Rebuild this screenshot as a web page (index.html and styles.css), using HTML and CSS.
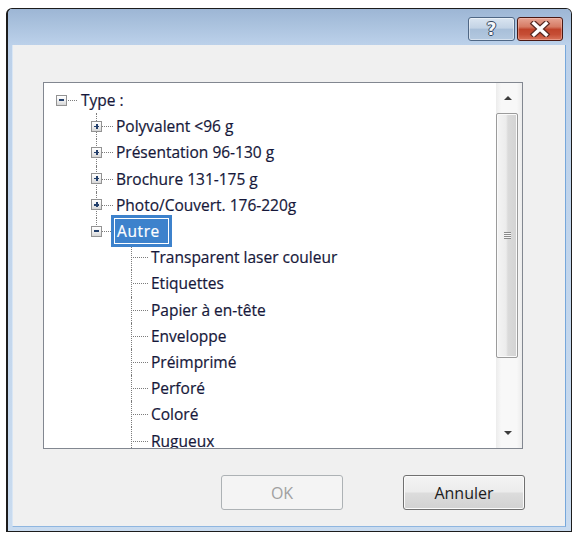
FILE: index.html
```html
<!DOCTYPE html>
<html>
<head>
<meta charset="utf-8">
<link rel="stylesheet" href="styles.css">
</head>
<body>
<div class="window">
  <div class="titlebar">
    <div class="cap-btn help"><span class="q">?</span></div>
    <div class="cap-btn close">
      <svg width="24" height="16" viewBox="0 0 24 16">
        <path d="M6 2.5 L18 13.5 M18 2.5 L6 13.5" stroke="#5a2a22" stroke-width="6" stroke-linecap="square" fill="none"/>
        <path d="M6 2.5 L18 13.5 M18 2.5 L6 13.5" stroke="#ffffff" stroke-width="3.6" stroke-linecap="square" fill="none"/>
      </svg>
    </div>
  </div>
  <div class="frame">
    <div class="client">
      <div class="tree">
        <div class="tree-list">
          <div class="row"><span class="cell root"><i class="box minus"></i></span><span class="label">Type :</span></div>
          <div class="row"><span class="cell"></span><span class="cell t"><i class="box plus"></i></span><span class="label">Polyvalent &lt;96 g</span></div>
          <div class="row"><span class="cell"></span><span class="cell t"><i class="box plus"></i></span><span class="label">Présentation 96-130 g</span></div>
          <div class="row"><span class="cell"></span><span class="cell t"><i class="box plus"></i></span><span class="label">Brochure 131-175 g</span></div>
          <div class="row"><span class="cell"></span><span class="cell t"><i class="box plus"></i></span><span class="label">Photo/Couvert. 176-220g</span></div>
          <div class="row"><span class="cell"></span><span class="cell l"><i class="box minus"></i></span><span class="label sel">Autre</span></div>
          <div class="row"><span class="cell"></span><span class="cell"></span><span class="cell t"></span><span class="label">Transparent laser couleur</span></div>
          <div class="row"><span class="cell"></span><span class="cell"></span><span class="cell t"></span><span class="label">Etiquettes</span></div>
          <div class="row"><span class="cell"></span><span class="cell"></span><span class="cell t"></span><span class="label">Papier à en-tête</span></div>
          <div class="row"><span class="cell"></span><span class="cell"></span><span class="cell t"></span><span class="label">Enveloppe</span></div>
          <div class="row"><span class="cell"></span><span class="cell"></span><span class="cell t"></span><span class="label">Préimprimé</span></div>
          <div class="row"><span class="cell"></span><span class="cell"></span><span class="cell t"></span><span class="label">Perforé</span></div>
          <div class="row"><span class="cell"></span><span class="cell"></span><span class="cell t"></span><span class="label">Coloré</span></div>
          <div class="row"><span class="cell"></span><span class="cell"></span><span class="cell t"></span><span class="label">Rugueux</span></div>
        </div>
        <div class="scrollbar">
          <div class="sb-btn"><i class="arrow up"></i></div>
          <div class="sb-track">
            <div class="thumb"><i class="grip"></i></div>
          </div>
          <div class="sb-btn"><i class="arrow down"></i></div>
        </div>
      </div>
      <div class="buttons">
        <div class="btn disabled">OK</div>
        <div class="btn">Annuler</div>
      </div>
    </div>
  </div>
</div>
</body>
</html>
```

FILE: styles.css
```css
* { box-sizing: border-box; }

html, body {
  margin: 0;
  padding: 0;
  background: #ffffff;
}

body {
  padding: 8px 0 0 6px;
  font-family: "Open Sans", "Noto Sans", sans-serif;
}

.window {
  width: 566px;
  height: 524px;
  border: 1px solid #1c1c1c;
  border-left-width: 2px;
  border-radius: 6px 6px 0 0;
  display: flex;
  flex-direction: column;
  background: #c4d7ee;
  overflow: hidden;
}

.titlebar {
  height: 36px;
  flex: none;
  display: flex;
  justify-content: flex-end;
  align-items: flex-start;
  gap: 2px;
  padding: 8px 8px 0 0;
  background: linear-gradient(to bottom, #9db6d5 0%, #a9c1dd 40%, #bcd1ea 100%);
}

.cap-btn {
  height: 24px;
  border-radius: 3px;
  display: flex;
  align-items: center;
  justify-content: center;
}

.help {
  width: 47px;
  border: 1px solid #4f6785;
  background: linear-gradient(to bottom, #dae5f1 0%, #c3d3e5 45%, #a8bfd9 52%, #b4c9e0 100%);
  box-shadow: inset 0 0 0 1px rgba(255,255,255,0.45);
}

.help .q {
  font-family: "DejaVu Sans", sans-serif;
  font-weight: bold;
  font-size: 17px;
  line-height: 1;
  color: #f4f7fb;
  text-shadow: -1px 0 #34465e, 1px 0 #34465e, 0 -1px #34465e, 0 1px #34465e;
}

.close {
  width: 46px;
  border: 1px solid #4a1812;
  background: linear-gradient(to bottom, #e6a493 0%, #d67b64 40%, #c0442b 52%, #c64e35 75%, #d9745b 100%);
  box-shadow: inset 0 0 0 1px rgba(255,210,200,0.4);
}

.frame {
  flex: 1;
  display: flex;
  padding: 0 5px 4px 4px;
  background: linear-gradient(to bottom, #bcd1ea 0%, #c9dbef 100%);
}

.client {
  flex: 1;
  background: #f0f0f0;
  border-left: 1px solid #d9e6f4;
  border-right: 1px solid #76a7db;
  border-bottom: 1px solid #8fb6e0;
  padding: 37px 40px 0 30px;
  display: flex;
  flex-direction: column;
}

.tree {
  width: 480px;
  height: 367px;
  border: 1px solid #828790;
  background: #ffffff;
  display: flex;
}

.tree-list {
  flex: 1;
  padding-top: 4px;
  overflow: hidden;
  font-size: 15.5px;
  color: #16183a;
}

.row {
  height: 26.2px;
  display: flex;
  align-items: center;
  white-space: nowrap;
}

.cell {
  width: 35px;
  height: 100%;
  flex: none;
  display: flex;
  align-items: center;
  justify-content: center;
  position: relative;
}

.cell.root::after,
.cell.t::after,
.cell.l::after {
  content: "";
  position: absolute;
  left: 19px;
  right: 1px;
  top: 50%;
  border-top: 1px dotted #7c7c7c;
}

.cell.root::after {
  left: 24px;
  right: 2px;
}

.cell.t::before,
.cell.l::before {
  content: "";
  position: absolute;
  left: 17px;
  top: 0;
  bottom: 0;
  border-left: 1px dotted #7c7c7c;
}

.cell.l::before {
  bottom: 50%;
}

.box {
  width: 11px;
  height: 11px;
  border: 1px solid #939393;
  background: linear-gradient(to bottom, #ffffff 0%, #f0f0f0 50%, #d6d6d6 100%);
  display: flex;
  align-items: center;
  justify-content: center;
  position: relative;
  z-index: 1;
}

.box::before {
  content: "";
  width: 5px;
  height: 1.5px;
  background: #24406c;
}

.box.plus::after {
  content: "";
  position: absolute;
  width: 1.5px;
  height: 5px;
  background: #24406c;
  left: 4px;
  top: 2px;
}

.label {
  margin-left: 2px;
  line-height: 20px;
  -webkit-text-stroke: 0.2px currentColor;
}

.label.sel {
  position: relative;
  z-index: 2;
  margin-left: -3px;
  padding: 3px 9px 3px 3px;
  border: 3px solid #3d82cc;
  background: #3d82cc;
  box-shadow: inset 0 0 0 1px #ffffff;
  color: #ffffff;
  letter-spacing: 0.6px;
}

.scrollbar {
  width: 26px;
  flex: none;
  display: flex;
  flex-direction: column;
  background: linear-gradient(to right, #ececec 0%, #f8f8f8 20%, #f8f8f8 80%, #ececec 100%);
}

.sb-btn {
  height: 30px;
  flex: none;
  display: flex;
  align-items: center;
  justify-content: center;
  padding-right: 2px;
}

.arrow {
  width: 0;
  height: 0;
  border-left: 4px solid transparent;
  border-right: 4px solid transparent;
}

.arrow.up { border-bottom: 4px solid #3c3c3c; }
.arrow.down { border-top: 4px solid #3c3c3c; }

.sb-track {
  flex: 1;
  padding: 0 4px 0 0;
}

.thumb {
  height: 245px;
  border: 1px solid #9b9b9b;
  border-radius: 2px;
  background: linear-gradient(to right, #f4f4f4 0%, #ececec 45%, #dadada 55%, #d3d3d3 100%);
  box-shadow: inset 0 0 0 1px #fafafa;
  display: flex;
  align-items: center;
  justify-content: center;
}

.grip {
  width: 7px;
  height: 7px;
  background: repeating-linear-gradient(to bottom, #8a8a8a 0 1px, #f5f5f5 1px 2px);
}

.buttons {
  margin-top: 26px;
  display: flex;
  justify-content: flex-end;
  gap: 60px;
}

.btn {
  width: 122px;
  height: 35px;
  border: 1px solid #707070;
  border-radius: 3px;
  background: linear-gradient(to bottom, #f4f4f4 0%, #ececec 48%, #dcdcdc 52%, #d2d2d2 100%);
  box-shadow: inset 0 0 0 1px #fbfbfb;
  display: flex;
  align-items: center;
  justify-content: center;
  font-size: 16px;
  color: #1c1c1c;
}

.btn.disabled {
  border-color: #adb2b5;
  background: #f4f4f4;
  box-shadow: none;
  color: #a0a0a0;
}
```
